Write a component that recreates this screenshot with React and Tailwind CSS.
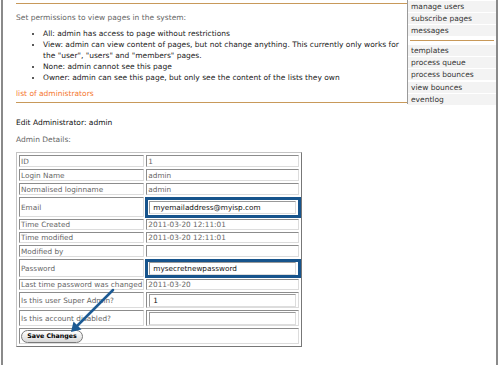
import React from "react";

const ROWS = [
  { label: "ID", value: "1", h: "h-[12px]" },
  { label: "Login Name", value: "admin", h: "h-[12px]" },
  { label: "Normalised loginname", value: "admin", h: "h-[12px]" },
  { label: "Email", input: "myemailaddress@myisp.com", framed: true, h: "h-[20px]" },
  { label: "Time Created", value: "2011-03-20 12:11:01", h: "h-[11px]" },
  { label: "Time modified", value: "2011-03-20 12:11:01", h: "h-[11px]" },
  { label: "Modified by", value: "", h: "h-[12px]" },
  { label: "Password", input: "mysecretnewpassword", framed: true, h: "h-[18px]" },
  { label: "Last time password was changed", value: "2011-03-20", h: "h-[11px]" },
  { label: "Is this user Super Admin?", input: "1", h: "h-[16px]" },
  { label: "Is this account disabled?", input: "", h: "h-[16px]" },
];

const MENU_TOP = ["manage users", "subscribe pages", "messages"];
const MENU_BOTTOM = ["templates", "process queue", "process bounces"];
const MENU_LAST = ["view bounces", "eventlog"];

function Cell({ children, className = "" }) {
  return (
    <td className={`whitespace-nowrap border border-t-[#8c8c8c] border-l-[#8c8c8c] border-r-[#dcdcdc] border-b-[#dcdcdc] p-0 px-[1px] align-middle leading-[9px] ${className}`}>
      {children}
    </td>
  );
}

function MenuItem({ label }) {
  return <div className="mt-px h-[11px] bg-[#f3f3f3] pl-[3px] leading-[11px] text-[#333]">{label}</div>;
}

export default function App() {
  return (
    <div className="relative flex h-[365px] w-[500px] overflow-hidden bg-white font-['DejaVu_Sans',sans-serif] text-[7.5px]">
      <div className="w-px" />
      <div className="w-[2px] bg-[#8a8a8a]" />

      {/* main column */}
      <div className="w-[404px] pl-[13px]">
        <div className="mt-[3px] h-px bg-[#c8995a]" />
        <p className="mt-[8px] leading-[11px] text-[#666]">Set permissions to view pages in the system:</p>
        <ul className="mt-[5px] list-disc pl-[27px] leading-[11px] text-[#222]">
          <li>All: admin has access to page without restrictions</li>
          <li>
            View: admin can view content of pages, but not change anything. This currently only works for the "user", "users" and "members" pages.
          </li>
          <li>None: admin cannot see this page</li>
          <li>Owner: admin can see this page, but only see the content of the lists they own</li>
        </ul>
        <div className="mt-[5px] leading-[11px] text-[#f5772f]">list of administrators</div>
        <div className="mt-[3px] h-px bg-[#c8995a]" />
        <div className="mt-[14px] leading-[11px] text-[#111]">Edit Administrator: admin</div>
        <div className="mt-[6px] leading-[11px] text-[#666]">Admin Details:</div>

        <table className="mt-[7px] w-[286px] border-separate border-spacing-[2px] border border-t-[#c4c4c4] border-l-[#c4c4c4] border-r-[#777] border-b-[#777] text-[7.3px] text-[#666]">
          <tbody>
            {ROWS.map((r) => (
              <tr key={r.label}>
                <Cell className={`w-[125px] ${r.h}`}>{r.label}</Cell>
                <Cell className={`relative ${r.h}`}>
                  {r.input !== undefined ? (
                    <div className="mx-[1px] h-[13px] border border-t-[#999] border-l-[#999] border-r-[#ddd] border-b-[#ddd] bg-white pl-[3px] leading-[11px] text-[#111]">
                      {r.input}
                    </div>
                  ) : (
                    r.value
                  )}
                  {r.framed && (
                    <div className="absolute -bottom-[2px] -left-[2px] -right-[3px] -top-[1px] border-[3px] border-[#17548c]" />
                  )}
                </Cell>
              </tr>
            ))}
            <tr>
              <td colSpan={2} className="h-[16px] border border-t-[#8c8c8c] border-l-[#8c8c8c] border-r-[#dcdcdc] border-b-[#dcdcdc] p-0 pl-[1px] align-middle">
                <button className="flex h-[13px] w-[62px] items-center justify-center rounded-full border border-[#7a7a7a] bg-gradient-to-b from-white to-[#d8d8d8] text-[6.3px] font-bold leading-none text-black">
                  Save Changes
                </button>
              </td>
            </tr>
          </tbody>
        </table>
      </div>

      {/* right menu */}
      <div className="h-[104px] w-[89px] border-b border-l border-[#9a9a9a]">
        {MENU_TOP.map((m) => (
          <MenuItem key={m} label={m} />
        ))}
        <div className="mx-[2px] mt-[4px] h-px bg-[#c8995a]" />
        <div className="mt-[4px]">
          {MENU_BOTTOM.map((m) => (
            <MenuItem key={m} label={m} />
          ))}
        </div>
        <div className="mt-[2px]">
          {MENU_LAST.map((m) => (
            <MenuItem key={m} label={m} />
          ))}
        </div>
      </div>

      <div className="w-[2px] bg-[#8a8a8a]" />
      <div className="w-[2px]" />

      {/* annotation arrow */}
      <svg className="pointer-events-none absolute left-0 top-0" width="500" height="365" viewBox="0 0 500 365">
        <line x1="113" y1="290" x2="77" y2="326" stroke="#1c5a94" strokeWidth="2.5" strokeLinecap="round" />
        <polygon points="71,332 73.5,321.5 81.5,329.5" fill="#1c5a94" />
      </svg>
    </div>
  );
}
